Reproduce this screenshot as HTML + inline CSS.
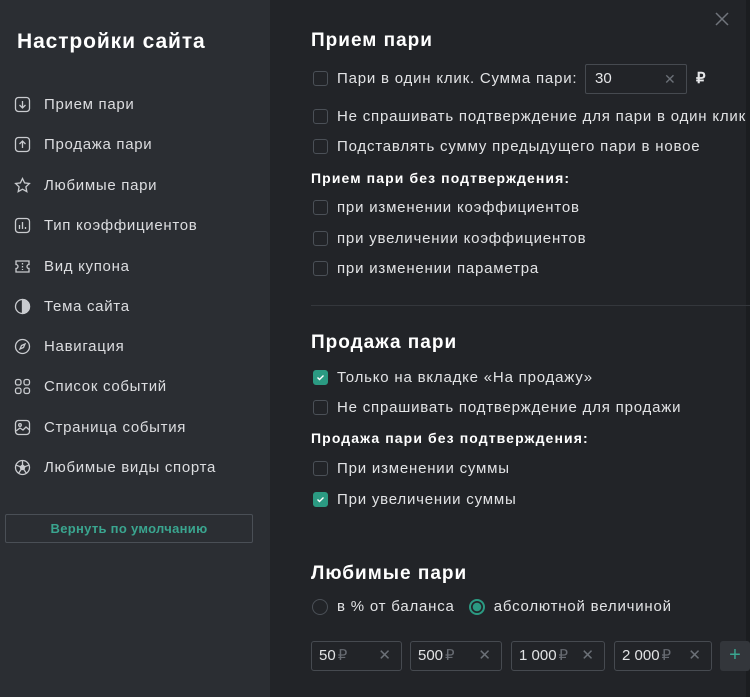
<!DOCTYPE html>
<html><head><meta charset="utf-8"><style>
*{box-sizing:border-box;margin:0;padding:0}
body{width:750px;height:697px;overflow:hidden;background:#222428;font-family:"Liberation Sans",sans-serif;color:#e6e7e9;position:relative}
.left{position:absolute;left:0;top:0;width:270px;height:697px;background:#2b2e33}
.left h1{position:absolute;left:17px;top:30px;font-size:21px;font-weight:bold;color:#fff;letter-spacing:0.9px}
.mi{position:absolute;left:14px;height:20px;display:flex;align-items:center;font-size:15px;color:#dcdde0;letter-spacing:0.7px}
.mi svg{width:17px;height:17px;margin-right:13px;flex:none}
.btn{position:absolute;left:5px;top:514px;width:248px;height:29px;border:1px solid #4a4f56;border-radius:2px;color:#3aa58f;font-size:13px;font-weight:bold;text-align:center;line-height:27px;letter-spacing:0.3px}
.a{position:absolute;white-space:nowrap;letter-spacing:0.8px}
.h{font-size:19px;font-weight:bold;color:#fff;left:311px;letter-spacing:1px}
.sub{font-size:14px;font-weight:bold;color:#fff;left:311px;letter-spacing:1.1px}
.row{left:313px;display:flex;align-items:center;font-size:15px;color:#e2e3e5}
.cb{width:15px;height:15px;border:1px solid #4b5057;border-radius:3px;margin-right:9px;flex:none;display:flex;align-items:center;justify-content:center}
.cb.on{background:#2b9a82;border-color:#2b9a82}
.div{position:absolute;left:311px;top:305px;width:439px;height:1px;background:#34373c}
.inp{position:absolute;left:585px;top:64px;width:102px;height:30px;border:1px solid #464a50;border-radius:2px;font-size:15px;padding-left:9px;line-height:28px}
.x{position:absolute;color:#6b7077;font-size:15px}
.chip{position:absolute;top:641px;height:30px;border:1px solid #464a50;border-radius:3px;font-size:15px;line-height:28px;padding-left:7px;color:#e2e3e5}
.chip i{font-style:normal;color:#676b72;margin-left:2px}
.chip b{position:absolute;right:10px;top:0;font-weight:normal;color:#6b7077}
.rad{width:16px;height:16px;border-radius:50%;border:1px solid #4b5057;margin-right:9px;flex:none}
.rad.on{border:2px solid #2b9a82;background:radial-gradient(circle,#2b9a82 0 4px,transparent 4.5px)}
</style></head><body>
<div class="left">
<h1>Настройки сайта</h1>
<div class="mi" style="top:94px"><svg viewBox="0 0 17 17" fill="none" stroke="#c9cbcf" stroke-width="1.3"><rect x="1.5" y="1.5" width="14" height="14" rx="3"/><path d="M8.5 5v7M5.5 9l3 3 3-3"/></svg>Прием пари</div>
<div class="mi" style="top:134px"><svg viewBox="0 0 17 17" fill="none" stroke="#c9cbcf" stroke-width="1.3"><rect x="1.5" y="1.5" width="14" height="14" rx="3"/><path d="M8.5 12V5M5.5 8l3-3 3 3"/></svg>Продажа пари</div>
<div class="mi" style="top:175px"><svg viewBox="0 0 17 17" fill="none" stroke="#c9cbcf" stroke-width="1.3"><path d="M8.5 1.5l2.1 4.4 4.8.6-3.5 3.3.9 4.8-4.3-2.4-4.3 2.4.9-4.8L1.6 6.5l4.8-.6z"/></svg>Любимые пари</div>
<div class="mi" style="top:215px"><svg viewBox="0 0 17 17" fill="none" stroke="#c9cbcf" stroke-width="1.3"><rect x="1.5" y="1.5" width="14" height="14" rx="3"/><path d="M5.5 12V8M8.5 12V5M11.5 12v-2"/></svg>Тип коэффициентов</div>
<div class="mi" style="top:256px"><svg viewBox="0 0 17 17" fill="none" stroke="#c9cbcf" stroke-width="1.3"><path d="M2 3h13v3.5a2 2 0 000 4V14H2v-3.5a2 2 0 000-4z"/><path d="M8.5 5v1.5M8.5 8v1.5M8.5 11v1"/></svg>Вид купона</div>
<div class="mi" style="top:296px"><svg viewBox="0 0 17 17" fill="none" stroke="#c9cbcf" stroke-width="1.3"><circle cx="8.5" cy="8.5" r="7"/><path d="M8.5 1.5a7 7 0 010 14z" fill="#c9cbcf"/></svg>Тема сайта</div>
<div class="mi" style="top:336px"><svg viewBox="0 0 17 17" fill="none" stroke="#c9cbcf" stroke-width="1.3"><circle cx="8.5" cy="8.5" r="7"/><path d="M11 6l-1.5 3.5L6 11l1.5-3.5z"/></svg>Навигация</div>
<div class="mi" style="top:376px"><svg viewBox="0 0 17 17" fill="none" stroke="#c9cbcf" stroke-width="1.3"><rect x="1.5" y="1.5" width="5.5" height="5.5" rx="2"/><rect x="10" y="1.5" width="5.5" height="5.5" rx="2"/><rect x="1.5" y="10" width="5.5" height="5.5" rx="2"/><rect x="10" y="10" width="5.5" height="5.5" rx="2"/></svg>Список событий</div>
<div class="mi" style="top:417px"><svg viewBox="0 0 17 17" fill="none" stroke="#c9cbcf" stroke-width="1.3"><rect x="1.5" y="1.5" width="14" height="14" rx="3"/><circle cx="6" cy="6" r="1.3"/><path d="M2 12l4-3 3 2 3-3 3.5 3"/></svg>Страница события</div>
<div class="mi" style="top:457px"><svg viewBox="0 0 17 17" fill="none" stroke="#c9cbcf" stroke-width="1.3"><circle cx="8.5" cy="8.5" r="7"/><path d="M8.5 6l2.3 1.7-.9 2.8H7.1l-.9-2.8z" fill="#c9cbcf"/><path d="M8.5 1.5V6M10.8 7.7l4-1.5M9.9 10.5l2.3 3.5M7.1 10.5l-2.3 3.5M6.2 7.7l-4-1.5"/></svg>Любимые виды спорта</div>
<div class="btn">Вернуть по умолчанию</div>
</div>

<svg style="position:absolute;left:715px;top:12px" width="14" height="14" viewBox="0 0 14 14"><path d="M1 1l12 12M13 1L1 13" stroke="#70757c" stroke-width="1.5"/></svg>
<div style="position:absolute;left:746px;top:0;width:4px;height:697px;background:#1b1d20"></div>

<div class="a h" style="top:30px">Прием пари</div>
<div class="a row" style="top:70px"><span class="cb"></span>Пари в один клик. Сумма пари:</div>
<div class="inp">30<span class="x" style="left:78px;top:0;font-size:14px">✕</span></div>
<div class="a" style="left:696px;top:69px;font-size:15px;font-weight:bold">₽</div>
<div class="a row" style="top:108px"><span class="cb"></span>Не спрашивать подтверждение для пари в один клик</div>
<div class="a row" style="top:138px"><span class="cb"></span>Подставлять сумму предыдущего пари в новое</div>
<div class="a sub" style="top:170px">Прием пари без подтверждения:</div>
<div class="a row" style="top:199px"><span class="cb"></span>при изменении коэффициентов</div>
<div class="a row" style="top:230px"><span class="cb"></span>при увеличении коэффициентов</div>
<div class="a row" style="top:260px"><span class="cb"></span>при изменении параметра</div>
<div class="div"></div>

<div class="a h" style="top:332px">Продажа пари</div>
<div class="a row" style="top:369px"><span class="cb on"><svg width="9" height="9" viewBox="0 0 9 9"><path d="M1.5 4.5l2 2 4-4" stroke="#fff" stroke-width="1.4" fill="none"/></svg></span>Только на вкладке «На продажу»</div>
<div class="a row" style="top:399px"><span class="cb"></span>Не спрашивать подтверждение для продажи</div>
<div class="a sub" style="top:430px">Продажа пари без подтверждения:</div>
<div class="a row" style="top:460px"><span class="cb"></span>При изменении суммы</div>
<div class="a row" style="top:491px"><span class="cb on"><svg width="9" height="9" viewBox="0 0 9 9"><path d="M1.5 4.5l2 2 4-4" stroke="#fff" stroke-width="1.4" fill="none"/></svg></span>При увеличении суммы</div>

<div class="a h" style="top:563px">Любимые пари</div>
<div class="a row" style="top:598px;left:312px"><span class="rad"></span>в % от баланса<span class="rad on" style="margin-left:14px"></span>абсолютной величиной</div>

<div class="chip" style="left:311px;width:91px">50<i>₽</i><b>✕</b></div>
<div class="chip" style="left:410px;width:92px">500<i>₽</i><b>✕</b></div>
<div class="chip" style="left:511px;width:94px">1 000<i>₽</i><b>✕</b></div>
<div class="chip" style="left:614px;width:98px">2 000<i>₽</i><b>✕</b></div>
<div style="position:absolute;left:720px;top:641px;width:30px;height:30px;background:#33363b;border-radius:3px;color:#3aa58f;font-size:20px;text-align:center;line-height:29px">+</div>
</body></html>
